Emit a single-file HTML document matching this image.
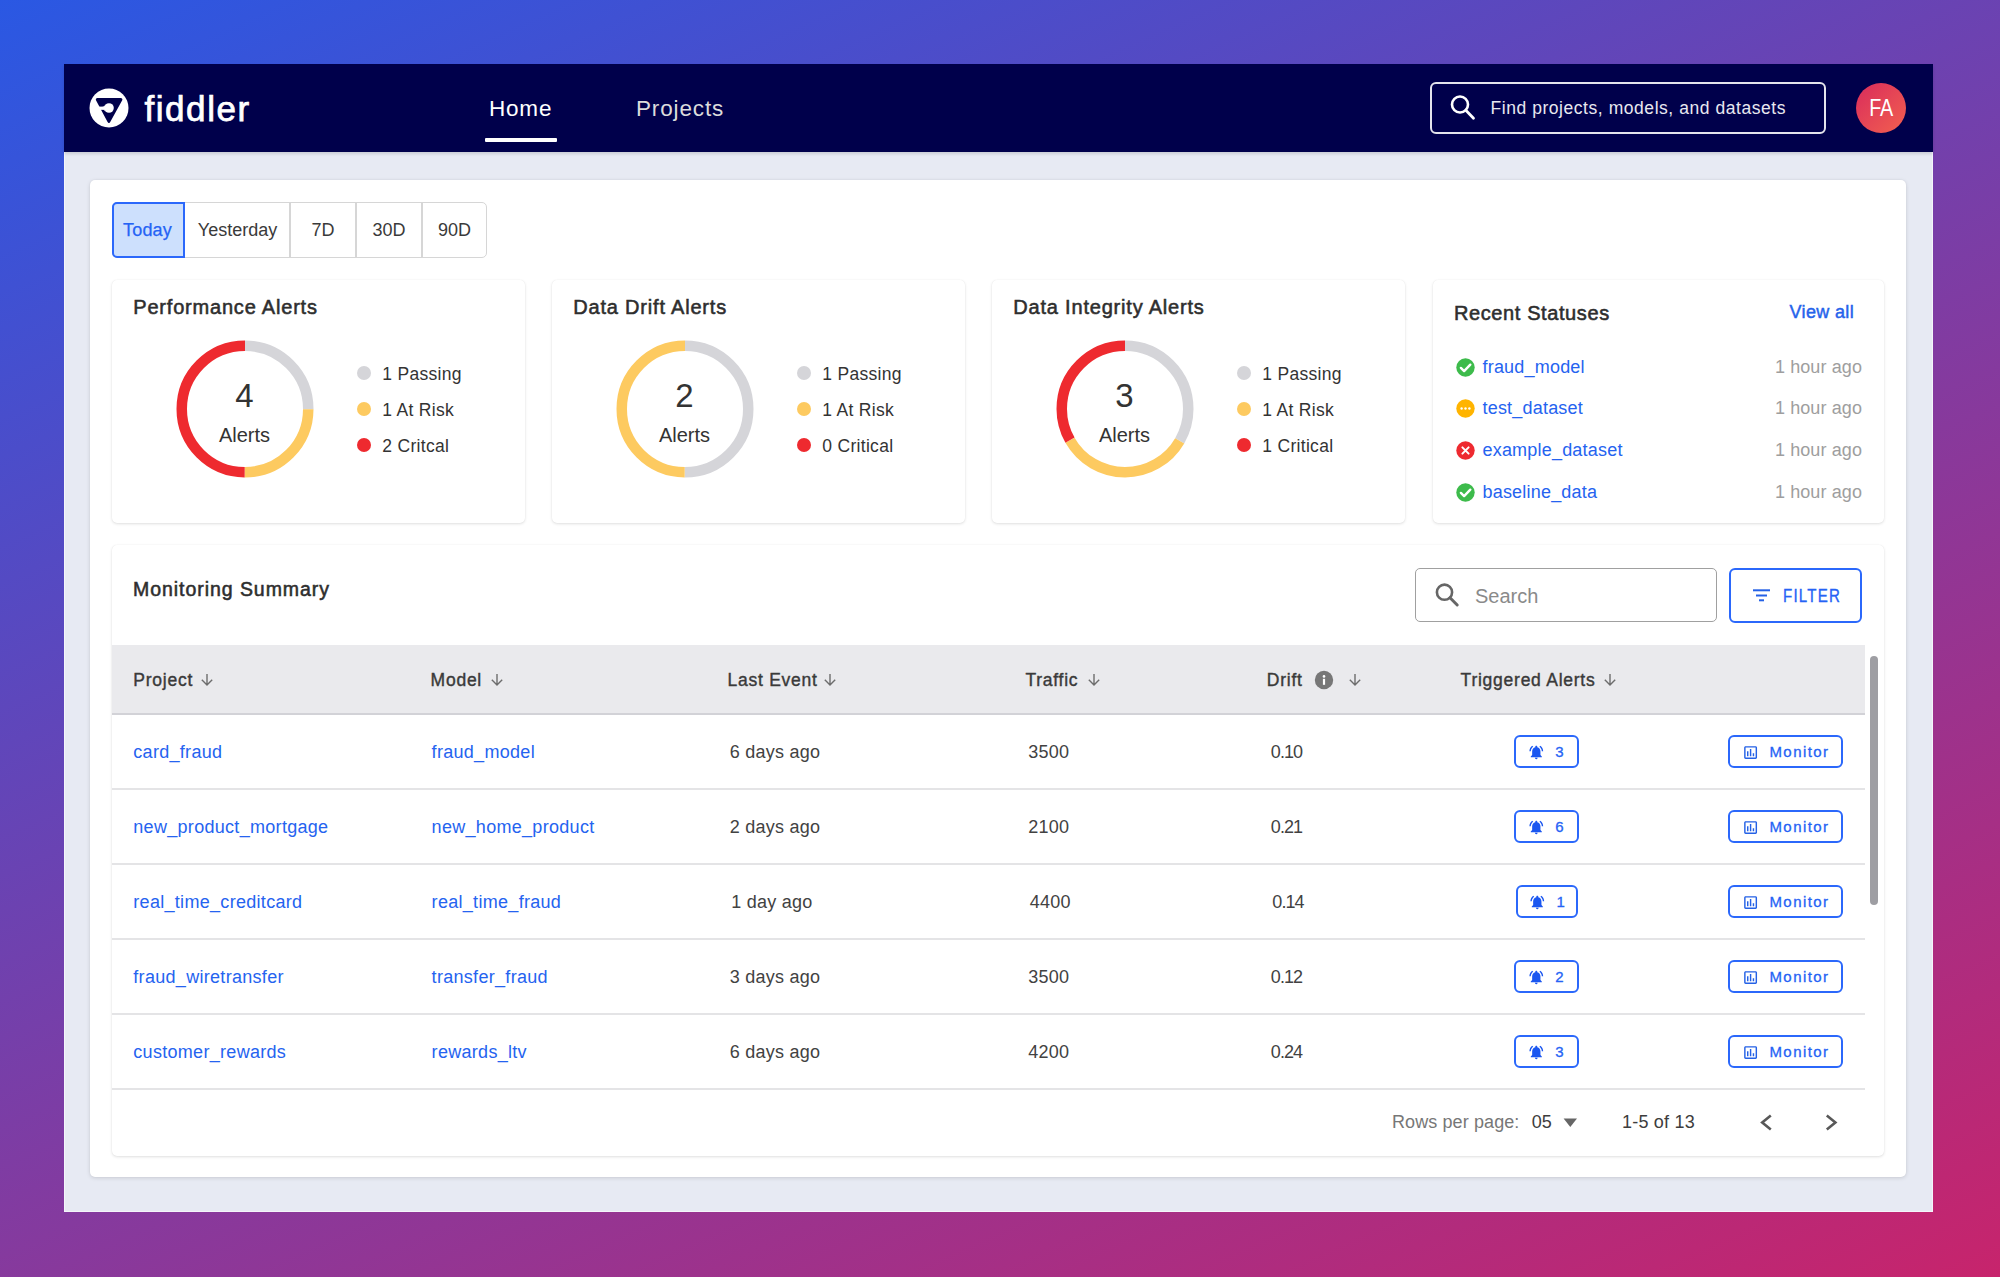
<!DOCTYPE html>
<html><head><meta charset="utf-8">
<style>
*{margin:0;padding:0;box-sizing:border-box}
html,body{width:2000px;height:1277px;overflow:hidden}
body{position:relative;font-family:"Liberation Sans",sans-serif;background:linear-gradient(156deg,#2a58e3 0%,#c7246c 100%);color:#333}
.a{position:absolute;white-space:nowrap}
#win{position:absolute;left:64px;top:64px;width:1869px;height:1148px;background:#e7eaf3;border-left:1px solid #f4f5fa;border-right:1px solid #f4f5fa;border-bottom:1px solid #f4f5fa}
#hdr{position:absolute;left:64px;top:64px;width:1869px;height:88.2px;background:#00004b;box-shadow:0 2px 3px rgba(0,0,0,.13)}
.card{position:absolute;background:#fff;border-radius:5px;box-shadow:0 1px 3px rgba(0,0,0,.12),0 0 1px rgba(0,0,0,.08)}
.t{position:absolute;white-space:nowrap;line-height:1}
.blue{color:#2563f0}
</style></head><body>
<div id="win"></div>
<div id="hdr"></div>

<!-- logo -->
<svg class="a" style="left:89px;top:88px" width="40" height="40" viewBox="0 0 40 40">
<circle cx="20" cy="20" r="19.5" fill="#fff"/>
<path d="M8.3 11.6 L31.9 11.6 L19.9 33.4 Z" fill="#00004b" stroke="#00004b" stroke-width="3" stroke-linejoin="round"/>
<rect x="4" y="18.6" width="14" height="3.25" fill="#fff"/>
<circle cx="20" cy="20" r="4.8" fill="#fff"/>
<path d="M13.2 18.65 Q15.4 18.65 16.1 17.2 L16.6 18.9 Z M13.2 21.8 Q15.4 21.8 16.1 23.2 L16.6 21.5 Z" fill="#fff"/>
</svg>
<div class="t" style="left:144.5px;top:90.5px;font-size:35px;color:#fff;letter-spacing:1.55px;-webkit-text-stroke:0.75px #fff">fiddler</div>

<!-- nav -->
<div class="t" style="left:489px;top:98px;font-size:22.5px;color:#fff;letter-spacing:0.8px">Home</div>
<div class="a" style="left:485px;top:138px;width:72px;height:3.6px;border-radius:1px;background:#fff"></div>
<div class="t" style="left:636px;top:98px;font-size:22.5px;color:#dcdcdc;letter-spacing:0.85px">Projects</div>

<!-- global search -->
<div class="a" style="left:1430px;top:82px;width:396px;height:52px;border:2px solid #e4e4ec;border-radius:6px"></div>
<svg class="a" style="left:1448px;top:93px" width="30" height="30" viewBox="0 0 30 30">
<circle cx="12" cy="11.5" r="8" fill="none" stroke="#fff" stroke-width="2.6"/>
<line x1="17.8" y1="17.3" x2="25.5" y2="25.2" stroke="#fff" stroke-width="2.8" stroke-linecap="round"/>
</svg>
<div class="t" style="left:1490.5px;top:99.6px;font-size:17.5px;color:#e8e8f0;letter-spacing:0.55px">Find projects, models, and datasets</div>

<!-- avatar -->
<div class="a" style="left:1856px;top:83px;width:50px;height:50px;border-radius:50%;background:linear-gradient(135deg,#d92c5c,#f2604f)"></div>
<div class="t" style="left:1856px;top:97.4px;width:50px;text-align:center;font-size:23px;color:#fff;letter-spacing:-0.5px;transform:scaleX(0.86)">FA</div>

<!-- outer card -->
<div class="card" style="left:90px;top:180px;width:1816px;height:997px;box-shadow:0 1px 4px rgba(0,0,0,.13),0 0 2px rgba(0,0,0,.06)"></div>


<!-- segmented -->
<div class="a" style="left:112px;top:202px;width:375px;height:56px;border:1.5px solid #d6d6d6;border-radius:5px;background:#fff"></div>
<div class="a" style="left:289px;top:203px;width:1.5px;height:54px;background:#d6d6d6"></div>
<div class="a" style="left:355px;top:203px;width:1.5px;height:54px;background:#d6d6d6"></div>
<div class="a" style="left:421px;top:203px;width:1.5px;height:54px;background:#d6d6d6"></div>
<div class="a" style="left:112px;top:202px;width:73px;height:56px;border:2px solid #2b68fb;border-radius:5px 0 0 5px;background:#cde0fd"></div>
<div class="t" style="left:111px;top:221px;width:73px;text-align:center;font-size:18px;color:#2563f5;letter-spacing:0.2px;-webkit-text-stroke:0.25px #2563f5">Today</div>
<div class="t" style="left:185px;top:221px;width:105px;text-align:center;font-size:18px;color:#3a3a3a">Yesterday</div>
<div class="t" style="left:290px;top:221px;width:66px;text-align:center;font-size:18px;color:#3a3a3a">7D</div>
<div class="t" style="left:356px;top:221px;width:66px;text-align:center;font-size:18px;color:#3a3a3a">30D</div>
<div class="t" style="left:422px;top:221px;width:65px;text-align:center;font-size:18px;color:#3a3a3a">90D</div>

<!-- alert cards -->
<div class="card" style="left:112px;top:280px;width:413px;height:243px"></div>
<div class="t" style="left:133.3px;top:297px;font-size:20px;color:#2e2e2e;letter-spacing:0.8px;-webkit-text-stroke:0.55px #2e2e2e">Performance Alerts</div>
<svg class="a" style="left:175.5px;top:340px" width="138" height="138" viewBox="0 0 138 138"><circle cx="69" cy="69" r="63.25" fill="none" stroke="#d5d5d9" stroke-width="10.5" stroke-dasharray="99.353 397.411" stroke-dashoffset="0.000" transform="rotate(-90 69 69)"/><circle cx="69" cy="69" r="63.25" fill="none" stroke="#fdca60" stroke-width="10.5" stroke-dasharray="99.353 397.411" stroke-dashoffset="-99.353" transform="rotate(-90 69 69)"/><circle cx="69" cy="69" r="63.25" fill="none" stroke="#ee2a2f" stroke-width="10.5" stroke-dasharray="198.706 397.411" stroke-dashoffset="-198.706" transform="rotate(-90 69 69)"/></svg>
<div class="t" style="left:194.5px;top:379px;width:100px;text-align:center;font-size:33px;color:#333">4</div>
<div class="t" style="left:194.5px;top:425px;width:100px;text-align:center;font-size:20px;color:#333">Alerts</div>
<div class="a" style="left:357px;top:366px;width:14px;height:14px;border-radius:50%;background:#d5d5d9"></div>
<div class="t" style="left:382.3px;top:365.7px;font-size:17.5px;color:#333;letter-spacing:0.3px">1 Passing</div>
<div class="a" style="left:357px;top:402px;width:14px;height:14px;border-radius:50%;background:#fdca60"></div>
<div class="t" style="left:382.3px;top:401.7px;font-size:17.5px;color:#333;letter-spacing:0.3px">1 At Risk</div>
<div class="a" style="left:357px;top:438px;width:14px;height:14px;border-radius:50%;background:#ee2a2f"></div>
<div class="t" style="left:382.3px;top:437.7px;font-size:17.5px;color:#333;letter-spacing:0.3px">2 Critcal</div>
<div class="card" style="left:552px;top:280px;width:413px;height:243px"></div>
<div class="t" style="left:573.3px;top:297px;font-size:20px;color:#2e2e2e;letter-spacing:0.8px;-webkit-text-stroke:0.55px #2e2e2e">Data Drift Alerts</div>
<svg class="a" style="left:615.5px;top:340px" width="138" height="138" viewBox="0 0 138 138"><circle cx="69" cy="69" r="63.25" fill="none" stroke="#d5d5d9" stroke-width="10.5" stroke-dasharray="198.706 397.411" stroke-dashoffset="0.000" transform="rotate(-90 69 69)"/><circle cx="69" cy="69" r="63.25" fill="none" stroke="#fdca60" stroke-width="10.5" stroke-dasharray="198.706 397.411" stroke-dashoffset="-198.706" transform="rotate(-90 69 69)"/></svg>
<div class="t" style="left:634.5px;top:379px;width:100px;text-align:center;font-size:33px;color:#333">2</div>
<div class="t" style="left:634.5px;top:425px;width:100px;text-align:center;font-size:20px;color:#333">Alerts</div>
<div class="a" style="left:797px;top:366px;width:14px;height:14px;border-radius:50%;background:#d5d5d9"></div>
<div class="t" style="left:822.3px;top:365.7px;font-size:17.5px;color:#333;letter-spacing:0.3px">1 Passing</div>
<div class="a" style="left:797px;top:402px;width:14px;height:14px;border-radius:50%;background:#fdca60"></div>
<div class="t" style="left:822.3px;top:401.7px;font-size:17.5px;color:#333;letter-spacing:0.3px">1 At Risk</div>
<div class="a" style="left:797px;top:438px;width:14px;height:14px;border-radius:50%;background:#ee2a2f"></div>
<div class="t" style="left:822.3px;top:437.7px;font-size:17.5px;color:#333;letter-spacing:0.3px">0 Critical</div>
<div class="card" style="left:992px;top:280px;width:413px;height:243px"></div>
<div class="t" style="left:1013.3px;top:297px;font-size:20px;color:#2e2e2e;letter-spacing:0.8px;-webkit-text-stroke:0.55px #2e2e2e">Data Integrity Alerts</div>
<svg class="a" style="left:1055.5px;top:340px" width="138" height="138" viewBox="0 0 138 138"><circle cx="69" cy="69" r="63.25" fill="none" stroke="#d5d5d9" stroke-width="10.5" stroke-dasharray="132.470 397.411" stroke-dashoffset="0.000" transform="rotate(-90 69 69)"/><circle cx="69" cy="69" r="63.25" fill="none" stroke="#fdca60" stroke-width="10.5" stroke-dasharray="132.470 397.411" stroke-dashoffset="-132.470" transform="rotate(-90 69 69)"/><circle cx="69" cy="69" r="63.25" fill="none" stroke="#ee2a2f" stroke-width="10.5" stroke-dasharray="132.470 397.411" stroke-dashoffset="-264.941" transform="rotate(-90 69 69)"/></svg>
<div class="t" style="left:1074.5px;top:379px;width:100px;text-align:center;font-size:33px;color:#333">3</div>
<div class="t" style="left:1074.5px;top:425px;width:100px;text-align:center;font-size:20px;color:#333">Alerts</div>
<div class="a" style="left:1237px;top:366px;width:14px;height:14px;border-radius:50%;background:#d5d5d9"></div>
<div class="t" style="left:1262.3px;top:365.7px;font-size:17.5px;color:#333;letter-spacing:0.3px">1 Passing</div>
<div class="a" style="left:1237px;top:402px;width:14px;height:14px;border-radius:50%;background:#fdca60"></div>
<div class="t" style="left:1262.3px;top:401.7px;font-size:17.5px;color:#333;letter-spacing:0.3px">1 At Risk</div>
<div class="a" style="left:1237px;top:438px;width:14px;height:14px;border-radius:50%;background:#ee2a2f"></div>
<div class="t" style="left:1262.3px;top:437.7px;font-size:17.5px;color:#333;letter-spacing:0.3px">1 Critical</div>

<!-- recent statuses -->
<div class="card" style="left:1433px;top:280px;width:451px;height:243px"></div>
<div class="t" style="left:1454px;top:303px;font-size:20px;color:#2e2e2e;letter-spacing:0.6px;-webkit-text-stroke:0.55px #2e2e2e">Recent Statuses</div>
<div class="t" style="left:1700px;top:302.5px;width:154px;text-align:right;font-size:18px;color:#2563eb;letter-spacing:0.35px;-webkit-text-stroke:0.45px #2563eb">View all</div>
<svg class="a" style="left:1456px;top:358.0px" width="19" height="19" viewBox="0 0 19 19"><circle cx="9.5" cy="9.5" r="9.2" fill="#3dbb4b"/><path d="M4.9 9.9 L8.1 13.1 L14.3 6.7" fill="none" stroke="#fff" stroke-width="2.4" stroke-linecap="round" stroke-linejoin="round"/></svg>
<div class="t blue" style="left:1482.5px;top:358.0px;font-size:18px;letter-spacing:0.2px">fraud_model</div>
<div class="t" style="left:1700px;top:358.0px;width:162px;text-align:right;font-size:18px;color:#9e9e9e;letter-spacing:0.1px">1 hour ago</div>
<svg class="a" style="left:1456px;top:399.2px" width="19" height="19" viewBox="0 0 19 19"><circle cx="9.5" cy="9.5" r="9.2" fill="#ffb400"/><circle cx="5.6" cy="9.5" r="1.2" fill="#fff"/><circle cx="9.5" cy="9.5" r="1.2" fill="#fff"/><circle cx="13.4" cy="9.5" r="1.2" fill="#fff"/></svg>
<div class="t blue" style="left:1482.5px;top:399.2px;font-size:18px;letter-spacing:0.2px">test_dataset</div>
<div class="t" style="left:1700px;top:399.2px;width:162px;text-align:right;font-size:18px;color:#9e9e9e;letter-spacing:0.1px">1 hour ago</div>
<svg class="a" style="left:1456px;top:441.3px" width="19" height="19" viewBox="0 0 19 19"><circle cx="9.5" cy="9.5" r="9.2" fill="#ee2a30"/><path d="M6.4 6.4 L12.6 12.6 M12.6 6.4 L6.4 12.6" fill="none" stroke="#fff" stroke-width="2" stroke-linecap="round"/></svg>
<div class="t blue" style="left:1482.5px;top:441.3px;font-size:18px;letter-spacing:0.2px">example_dataset</div>
<div class="t" style="left:1700px;top:441.3px;width:162px;text-align:right;font-size:18px;color:#9e9e9e;letter-spacing:0.1px">1 hour ago</div>
<svg class="a" style="left:1456px;top:482.8px" width="19" height="19" viewBox="0 0 19 19"><circle cx="9.5" cy="9.5" r="9.2" fill="#3dbb4b"/><path d="M4.9 9.9 L8.1 13.1 L14.3 6.7" fill="none" stroke="#fff" stroke-width="2.4" stroke-linecap="round" stroke-linejoin="round"/></svg>
<div class="t blue" style="left:1482.5px;top:482.8px;font-size:18px;letter-spacing:0.2px">baseline_data</div>
<div class="t" style="left:1700px;top:482.8px;width:162px;text-align:right;font-size:18px;color:#9e9e9e;letter-spacing:0.1px">1 hour ago</div>

<!-- table card -->
<div class="card" style="left:112px;top:545px;width:1772px;height:611px"></div>
<div class="t" style="left:133px;top:580.3px;font-size:19.5px;color:#2e2e2e;letter-spacing:0.95px;-webkit-text-stroke:0.55px #2e2e2e">Monitoring Summary</div>
<div class="a" style="left:1415px;top:568px;width:302px;height:54px;border:1.5px solid #a0a0a0;border-radius:5px"></div>
<svg class="a" style="left:1432px;top:580px" width="30" height="30" viewBox="0 0 30 30">
<circle cx="12.5" cy="12.2" r="7.6" fill="none" stroke="#666" stroke-width="2.6"/>
<line x1="18" y1="17.8" x2="25.2" y2="25" stroke="#666" stroke-width="3" stroke-linecap="round"/>
</svg>
<div class="t" style="left:1475px;top:586.4px;font-size:20px;color:#8a8a8a">Search</div>
<div class="a" style="left:1728.5px;top:567.5px;width:133.5px;height:55px;border:2px solid #2b68fb;border-radius:6px"></div>
<svg class="a" style="left:1750px;top:585px" width="24" height="20" viewBox="0 0 24 20">
<line x1="3" y1="5.3" x2="20" y2="5.3" stroke="#2461e6" stroke-width="2"/>
<line x1="6" y1="10.5" x2="17" y2="10.5" stroke="#2461e6" stroke-width="2"/>
<line x1="9" y1="15.3" x2="14" y2="15.3" stroke="#2461e6" stroke-width="2"/>
</svg>
<div class="t" style="left:1782.5px;top:588px;font-size:17.5px;color:#2563f5;letter-spacing:1.4px;-webkit-text-stroke:0.35px #2563f5;transform:scaleX(0.86);transform-origin:0 0">FILTER</div>

<!-- table header -->
<div class="a" style="left:112px;top:645px;width:1753px;height:70px;background:#eaeaed;border-bottom:2px solid #d2d2d7"></div>
<div class="t" style="left:133.3px;top:671.7px;font-size:17.5px;color:#3a3a3a;letter-spacing:0.75px;-webkit-text-stroke:0.4px #3a3a3a">Project</div>
<svg class="a" style="left:200.5px;top:672px" width="12" height="14" viewBox="0 0 12 14"><path d="M6 2 V13 M0.8 7.8 L6 13 L11.2 7.8" fill="none" stroke="#6d6d6d" stroke-width="1.4"/></svg>
<div class="t" style="left:430.6px;top:671.7px;font-size:17.5px;color:#3a3a3a;letter-spacing:0.75px;-webkit-text-stroke:0.4px #3a3a3a">Model</div>
<svg class="a" style="left:490.5px;top:672px" width="12" height="14" viewBox="0 0 12 14"><path d="M6 2 V13 M0.8 7.8 L6 13 L11.2 7.8" fill="none" stroke="#6d6d6d" stroke-width="1.4"/></svg>
<div class="t" style="left:727.5px;top:671.7px;font-size:17.5px;color:#3a3a3a;letter-spacing:0.75px;-webkit-text-stroke:0.4px #3a3a3a">Last Event</div>
<svg class="a" style="left:823.5px;top:672px" width="12" height="14" viewBox="0 0 12 14"><path d="M6 2 V13 M0.8 7.8 L6 13 L11.2 7.8" fill="none" stroke="#6d6d6d" stroke-width="1.4"/></svg>
<div class="t" style="left:1025.4px;top:671.7px;font-size:17.5px;color:#3a3a3a;letter-spacing:0.75px;-webkit-text-stroke:0.4px #3a3a3a">Traffic</div>
<svg class="a" style="left:1088.0px;top:672px" width="12" height="14" viewBox="0 0 12 14"><path d="M6 2 V13 M0.8 7.8 L6 13 L11.2 7.8" fill="none" stroke="#6d6d6d" stroke-width="1.4"/></svg>
<div class="t" style="left:1266.8px;top:671.7px;font-size:17.5px;color:#3a3a3a;letter-spacing:0.75px;-webkit-text-stroke:0.4px #3a3a3a">Drift</div>
<svg class="a" style="left:1349.0px;top:672px" width="12" height="14" viewBox="0 0 12 14"><path d="M6 2 V13 M0.8 7.8 L6 13 L11.2 7.8" fill="none" stroke="#6d6d6d" stroke-width="1.4"/></svg>
<div class="t" style="left:1460.6px;top:671.7px;font-size:17.5px;color:#3a3a3a;letter-spacing:0.75px;-webkit-text-stroke:0.4px #3a3a3a">Triggered Alerts</div>
<svg class="a" style="left:1604.0px;top:672px" width="12" height="14" viewBox="0 0 12 14"><path d="M6 2 V13 M0.8 7.8 L6 13 L11.2 7.8" fill="none" stroke="#6d6d6d" stroke-width="1.4"/></svg>
<svg class="a" style="left:1314px;top:670px" width="20" height="20" viewBox="0 0 20 20"><circle cx="10" cy="10" r="9.2" fill="#777"/><circle cx="10" cy="6.4" r="1.3" fill="#fff"/><rect x="8.9" y="8.8" width="2.2" height="6" fill="#fff"/></svg>
<div class="t blue" style="left:133.3px;top:742.6px;font-size:18px;letter-spacing:0.3px">card_fraud</div>
<div class="t blue" style="left:431.6px;top:742.6px;font-size:18px;letter-spacing:0.3px">fraud_model</div>
<div class="t" style="left:729.7px;top:742.6px;font-size:18px;color:#424242;letter-spacing:0.25px">6 days ago</div>
<div class="t" style="left:1028.2px;top:742.6px;font-size:18px;color:#424242;letter-spacing:0.3px">3500</div>
<div class="t" style="left:1270.8px;top:742.6px;font-size:18px;color:#424242;letter-spacing:-0.9px">0.10</div>
<div class="a" style="left:1514.3px;top:735.1px;width:64.9px;height:33.2px;border:2px solid #2b68fb;border-radius:6px"></div>
<svg class="a" style="left:1528.0px;top:743.7px" width="16.6" height="16.6" viewBox="0 0 24 24"><path fill="#1a56f0" d="M7.58 4.08L6.15 2.65C3.75 4.48 2.170 7.3 2.03 10.5h2c.15-2.65 1.51-4.97 3.55-6.42zm12.39 6.42h2c-.15-3.2-1.73-6.02-4.12-7.85l-1.42 1.43c2.02 1.450 3.39 3.77 3.54 6.42zM18 11c0-3.07-1.64-5.64-4.5-6.32V4c0-.83-.67-1.5-1.5-1.5s-1.5.67-1.5 1.5v.68C7.63 5.36 6 7.92 6 11v5l-2 2v1h16v-1l-2-2v-5zm-6 11c.14 0 .27-.01.4-.04.65-.14 1.18-.58 1.44-1.18.1-.24.150-.5.15-.78h-4c.01 1.1.9 2 2.01 2z"/></svg>
<div class="t" style="left:1555.2px;top:744.2px;font-size:15px;color:#2563f5;-webkit-text-stroke:0.3px #2563f5">3</div>
<div class="a" style="left:1728.4px;top:735.1px;width:114.2px;height:33.2px;border:2px solid #2b68fb;border-radius:6px"></div>
<svg class="a" style="left:1741.8px;top:743.5px" width="17.2" height="17.2" viewBox="0 0 24 24"><path fill="#2461e6" d="M9 17H7v-7h2v7zm4 0h-2V7h2v10zm4 0h-2v-4h2v4zm2 2H5V5h14v14zm0-16H5c-1.1 0-2 .9-2 2v14c0 1.1.9 2 2 2h14c1.1 0 2-.9 2-2V5c0-1.1-.9-2-2-2z"/></svg>
<div class="t" style="left:1769.4px;top:744.3px;font-size:15px;color:#2563f5;letter-spacing:1.45px;-webkit-text-stroke:0.3px #2563f5">Monitor</div>
<div class="a" style="left:112px;top:787.75px;width:1753px;height:2px;background:#e4e4e6"></div>
<div class="t blue" style="left:133.3px;top:817.6px;font-size:18px;letter-spacing:0.3px">new_product_mortgage</div>
<div class="t blue" style="left:431.6px;top:817.6px;font-size:18px;letter-spacing:0.3px">new_home_product</div>
<div class="t" style="left:729.7px;top:817.6px;font-size:18px;color:#424242;letter-spacing:0.25px">2 days ago</div>
<div class="t" style="left:1028.2px;top:817.6px;font-size:18px;color:#424242;letter-spacing:0.3px">2100</div>
<div class="t" style="left:1270.8px;top:817.6px;font-size:18px;color:#424242;letter-spacing:-0.9px">0.21</div>
<div class="a" style="left:1514.3px;top:810.1px;width:64.9px;height:33.2px;border:2px solid #2b68fb;border-radius:6px"></div>
<svg class="a" style="left:1528.0px;top:818.7px" width="16.6" height="16.6" viewBox="0 0 24 24"><path fill="#1a56f0" d="M7.58 4.08L6.15 2.65C3.75 4.48 2.170 7.3 2.03 10.5h2c.15-2.65 1.51-4.97 3.55-6.42zm12.39 6.42h2c-.15-3.2-1.73-6.02-4.12-7.85l-1.42 1.43c2.02 1.450 3.39 3.77 3.54 6.42zM18 11c0-3.07-1.64-5.64-4.5-6.32V4c0-.83-.67-1.5-1.5-1.5s-1.5.67-1.5 1.5v.68C7.63 5.36 6 7.92 6 11v5l-2 2v1h16v-1l-2-2v-5zm-6 11c.14 0 .27-.01.4-.04.65-.14 1.18-.58 1.44-1.18.1-.24.150-.5.15-.78h-4c.01 1.1.9 2 2.01 2z"/></svg>
<div class="t" style="left:1555.2px;top:819.2px;font-size:15px;color:#2563f5;-webkit-text-stroke:0.3px #2563f5">6</div>
<div class="a" style="left:1728.4px;top:810.1px;width:114.2px;height:33.2px;border:2px solid #2b68fb;border-radius:6px"></div>
<svg class="a" style="left:1741.8px;top:818.5px" width="17.2" height="17.2" viewBox="0 0 24 24"><path fill="#2461e6" d="M9 17H7v-7h2v7zm4 0h-2V7h2v10zm4 0h-2v-4h2v4zm2 2H5V5h14v14zm0-16H5c-1.1 0-2 .9-2 2v14c0 1.1.9 2 2 2h14c1.1 0 2-.9 2-2V5c0-1.1-.9-2-2-2z"/></svg>
<div class="t" style="left:1769.4px;top:819.3px;font-size:15px;color:#2563f5;letter-spacing:1.45px;-webkit-text-stroke:0.3px #2563f5">Monitor</div>
<div class="a" style="left:112px;top:862.75px;width:1753px;height:2px;background:#e4e4e6"></div>
<div class="t blue" style="left:133.3px;top:892.6px;font-size:18px;letter-spacing:0.3px">real_time_creditcard</div>
<div class="t blue" style="left:431.6px;top:892.6px;font-size:18px;letter-spacing:0.3px">real_time_fraud</div>
<div class="t" style="left:731.2px;top:892.6px;font-size:18px;color:#424242;letter-spacing:0.25px">1 day ago</div>
<div class="t" style="left:1029.7px;top:892.6px;font-size:18px;color:#424242;letter-spacing:0.3px">4400</div>
<div class="t" style="left:1272.3px;top:892.6px;font-size:18px;color:#424242;letter-spacing:-0.9px">0.14</div>
<div class="a" style="left:1516.2px;top:885.1px;width:62.2px;height:33.2px;border:2px solid #2b68fb;border-radius:6px"></div>
<svg class="a" style="left:1529.3px;top:893.7px" width="16.6" height="16.6" viewBox="0 0 24 24"><path fill="#1a56f0" d="M7.58 4.08L6.15 2.65C3.75 4.48 2.170 7.3 2.03 10.5h2c.15-2.65 1.51-4.97 3.55-6.42zm12.39 6.42h2c-.15-3.2-1.73-6.02-4.12-7.85l-1.42 1.43c2.02 1.450 3.39 3.77 3.54 6.42zM18 11c0-3.07-1.64-5.64-4.5-6.32V4c0-.83-.67-1.5-1.5-1.5s-1.5.67-1.5 1.5v.68C7.63 5.36 6 7.92 6 11v5l-2 2v1h16v-1l-2-2v-5zm-6 11c.14 0 .27-.01.4-.04.65-.14 1.18-.58 1.44-1.18.1-.24.150-.5.15-.78h-4c.01 1.1.9 2 2.01 2z"/></svg>
<div class="t" style="left:1556.5px;top:894.2px;font-size:15px;color:#2563f5;-webkit-text-stroke:0.3px #2563f5">1</div>
<div class="a" style="left:1728.4px;top:885.1px;width:114.2px;height:33.2px;border:2px solid #2b68fb;border-radius:6px"></div>
<svg class="a" style="left:1741.8px;top:893.5px" width="17.2" height="17.2" viewBox="0 0 24 24"><path fill="#2461e6" d="M9 17H7v-7h2v7zm4 0h-2V7h2v10zm4 0h-2v-4h2v4zm2 2H5V5h14v14zm0-16H5c-1.1 0-2 .9-2 2v14c0 1.1.9 2 2 2h14c1.1 0 2-.9 2-2V5c0-1.1-.9-2-2-2z"/></svg>
<div class="t" style="left:1769.4px;top:894.3px;font-size:15px;color:#2563f5;letter-spacing:1.45px;-webkit-text-stroke:0.3px #2563f5">Monitor</div>
<div class="a" style="left:112px;top:937.75px;width:1753px;height:2px;background:#e4e4e6"></div>
<div class="t blue" style="left:133.3px;top:967.6px;font-size:18px;letter-spacing:0.3px">fraud_wiretransfer</div>
<div class="t blue" style="left:431.6px;top:967.6px;font-size:18px;letter-spacing:0.3px">transfer_fraud</div>
<div class="t" style="left:729.7px;top:967.6px;font-size:18px;color:#424242;letter-spacing:0.25px">3 days ago</div>
<div class="t" style="left:1028.2px;top:967.6px;font-size:18px;color:#424242;letter-spacing:0.3px">3500</div>
<div class="t" style="left:1270.8px;top:967.6px;font-size:18px;color:#424242;letter-spacing:-0.9px">0.12</div>
<div class="a" style="left:1514.3px;top:960.1px;width:64.9px;height:33.2px;border:2px solid #2b68fb;border-radius:6px"></div>
<svg class="a" style="left:1528.0px;top:968.7px" width="16.6" height="16.6" viewBox="0 0 24 24"><path fill="#1a56f0" d="M7.58 4.08L6.15 2.65C3.75 4.48 2.170 7.3 2.03 10.5h2c.15-2.65 1.51-4.97 3.55-6.42zm12.39 6.42h2c-.15-3.2-1.73-6.02-4.12-7.85l-1.42 1.43c2.02 1.450 3.39 3.77 3.54 6.42zM18 11c0-3.07-1.64-5.64-4.5-6.32V4c0-.83-.67-1.5-1.5-1.5s-1.5.67-1.5 1.5v.68C7.63 5.36 6 7.92 6 11v5l-2 2v1h16v-1l-2-2v-5zm-6 11c.14 0 .27-.01.4-.04.65-.14 1.18-.58 1.44-1.18.1-.24.150-.5.15-.78h-4c.01 1.1.9 2 2.01 2z"/></svg>
<div class="t" style="left:1555.2px;top:969.2px;font-size:15px;color:#2563f5;-webkit-text-stroke:0.3px #2563f5">2</div>
<div class="a" style="left:1728.4px;top:960.1px;width:114.2px;height:33.2px;border:2px solid #2b68fb;border-radius:6px"></div>
<svg class="a" style="left:1741.8px;top:968.5px" width="17.2" height="17.2" viewBox="0 0 24 24"><path fill="#2461e6" d="M9 17H7v-7h2v7zm4 0h-2V7h2v10zm4 0h-2v-4h2v4zm2 2H5V5h14v14zm0-16H5c-1.1 0-2 .9-2 2v14c0 1.1.9 2 2 2h14c1.1 0 2-.9 2-2V5c0-1.1-.9-2-2-2z"/></svg>
<div class="t" style="left:1769.4px;top:969.3px;font-size:15px;color:#2563f5;letter-spacing:1.45px;-webkit-text-stroke:0.3px #2563f5">Monitor</div>
<div class="a" style="left:112px;top:1012.75px;width:1753px;height:2px;background:#e4e4e6"></div>
<div class="t blue" style="left:133.3px;top:1042.6px;font-size:18px;letter-spacing:0.3px">customer_rewards</div>
<div class="t blue" style="left:431.6px;top:1042.6px;font-size:18px;letter-spacing:0.3px">rewards_ltv</div>
<div class="t" style="left:729.7px;top:1042.6px;font-size:18px;color:#424242;letter-spacing:0.25px">6 days ago</div>
<div class="t" style="left:1028.2px;top:1042.6px;font-size:18px;color:#424242;letter-spacing:0.3px">4200</div>
<div class="t" style="left:1270.8px;top:1042.6px;font-size:18px;color:#424242;letter-spacing:-0.9px">0.24</div>
<div class="a" style="left:1514.3px;top:1035.1px;width:64.9px;height:33.2px;border:2px solid #2b68fb;border-radius:6px"></div>
<svg class="a" style="left:1528.0px;top:1043.7px" width="16.6" height="16.6" viewBox="0 0 24 24"><path fill="#1a56f0" d="M7.58 4.08L6.15 2.65C3.75 4.48 2.170 7.3 2.03 10.5h2c.15-2.65 1.51-4.97 3.55-6.42zm12.39 6.42h2c-.15-3.2-1.73-6.02-4.12-7.85l-1.42 1.43c2.02 1.450 3.39 3.77 3.54 6.42zM18 11c0-3.07-1.64-5.64-4.5-6.32V4c0-.83-.67-1.5-1.5-1.5s-1.5.67-1.5 1.5v.68C7.63 5.36 6 7.92 6 11v5l-2 2v1h16v-1l-2-2v-5zm-6 11c.14 0 .27-.01.4-.04.65-.14 1.18-.58 1.44-1.18.1-.24.150-.5.15-.78h-4c.01 1.1.9 2 2.01 2z"/></svg>
<div class="t" style="left:1555.2px;top:1044.2px;font-size:15px;color:#2563f5;-webkit-text-stroke:0.3px #2563f5">3</div>
<div class="a" style="left:1728.4px;top:1035.1px;width:114.2px;height:33.2px;border:2px solid #2b68fb;border-radius:6px"></div>
<svg class="a" style="left:1741.8px;top:1043.5px" width="17.2" height="17.2" viewBox="0 0 24 24"><path fill="#2461e6" d="M9 17H7v-7h2v7zm4 0h-2V7h2v10zm4 0h-2v-4h2v4zm2 2H5V5h14v14zm0-16H5c-1.1 0-2 .9-2 2v14c0 1.1.9 2 2 2h14c1.1 0 2-.9 2-2V5c0-1.1-.9-2-2-2z"/></svg>
<div class="t" style="left:1769.4px;top:1044.3px;font-size:15px;color:#2563f5;letter-spacing:1.45px;-webkit-text-stroke:0.3px #2563f5">Monitor</div>
<div class="a" style="left:112px;top:1087.75px;width:1753px;height:2px;background:#e4e4e6"></div>
<div class="a" style="left:1870px;top:656px;width:8px;height:249px;border-radius:4px;background:#9e9ea3"></div>
<div class="t" style="left:1392px;top:1113.3px;font-size:18px;color:#777;letter-spacing:0.1px">Rows per page:</div>
<div class="t" style="left:1531.8px;top:1113.3px;font-size:18px;color:#3d3d3d">05</div>
<svg class="a" style="left:1563px;top:1118px" width="15" height="10" viewBox="0 0 15 10"><path d="M0.6 0.4 H14 L7.3 9 Z" fill="#666"/></svg>
<div class="t" style="left:1622px;top:1113.3px;font-size:18px;color:#3d3d3d;letter-spacing:0.2px">1-5 of 13</div>
<svg class="a" style="left:1756px;top:1112px" width="20" height="21" viewBox="0 0 20 21"><path d="M14.8 3.5 L6.2 10.5 L14.8 17.5" fill="none" stroke="#585858" stroke-width="2.6"/></svg>
<svg class="a" style="left:1821px;top:1112px" width="20" height="21" viewBox="0 0 20 21"><path d="M5.8 3.5 L14.4 10.5 L5.8 17.5" fill="none" stroke="#585858" stroke-width="2.6"/></svg>
</body></html>
